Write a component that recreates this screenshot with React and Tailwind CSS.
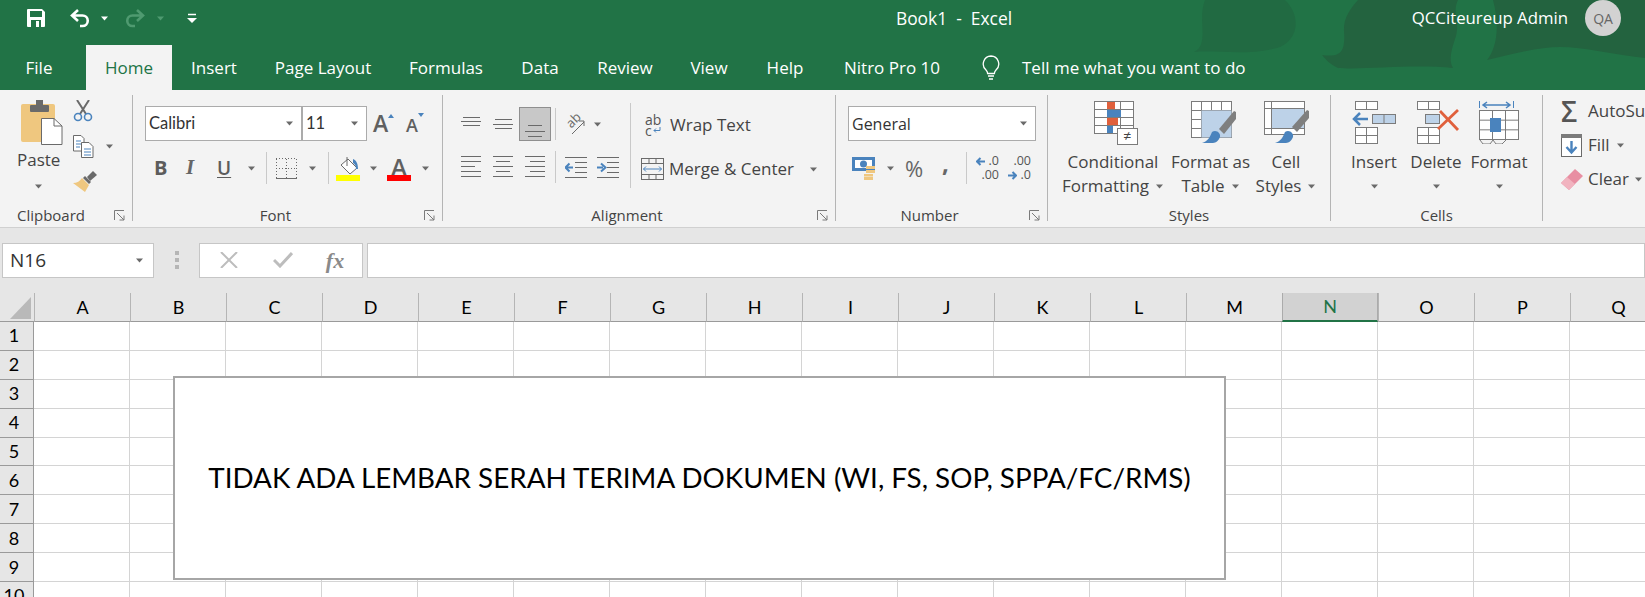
const COLUMNS = ["A", "B", "C", "D", "E", "F", "G", "H", "I", "J", "K", "L", "M", "N", "O", "P", "Q"];
const ROWS = [1, 2, 3, 4, 5, 6, 7, 8, 9, 10];
const GRAY = "#6a6a6a";
const BLUE = "#4a83bd";
const TAN = "#efc77f";
const ORANGE = "#e0603c";
const LIGHT = "#bdd2e8";

function Caret({ color = "#6a6a6a" }) {
  return (
    <svg width="9" height="5" viewBox="0 0 9 5" className="shrink-0">
      <path d="M1 .5h7L4.5 4.500z" fill={color} />
    </svg>
  );
}

function Launcher() {
  return (
    <svg width="11" height="11" viewBox="0 0 11 11">
      <path d="M.5 10V.5H10M3 3l7 7M10 5.5V10H5.5" fill="none" stroke="#7a7a7a" />
    </svg>
  );
}

function Lines({ rows, width = 20, height = 22 }) {
  return (
    <svg width={width} height={height} viewBox={`0 0 ${width} ${height}`}>
      {rows.map(([x1, x2, y]) => (
        <path key={`${x1}-${y}`} d={`M${x1} ${y + 0.5}H${x2}`} stroke={GRAY} />
      ))}
    </svg>
  );
}

function SaveIcon() {
  return (
    <svg width="20" height="20" viewBox="0 0 20 20">
      <path d="M1 2a1 1 0 0 1 1-1h14l3 3v14a1 1 0 0 1-1 1H2a1 1 0 0 1-1-1z" fill="#fff" />
      <rect x="4" y="3" width="12" height="6" fill="#217346" />
      <rect x="5" y="12" width="10" height="7" fill="#217346" />
      <rect x="10" y="13" width="3" height="6" fill="#fff" />
    </svg>
  );
}

function UndoIcon({ color, flip }) {
  return (
    <svg width="22" height="20" viewBox="0 0 22 20" className={flip ? "-scale-x-100" : ""}>
      <path d="M9 2L3 7.5 9 13M3 7.5h10.5a5 5 0 0 1 0 10.5H11" fill="none" stroke={color} strokeWidth="2.6" />
    </svg>
  );
}

function QuickAccess() {
  return (
    <svg width="10" height="10" viewBox="0 0 10 10">
      <path d="M1 1.500h8" stroke="#fff" strokeWidth="1.500" />
      <path d="M0 5h10L5 10z" fill="#fff" />
    </svg>
  );
}

function Bulb() {
  return (
    <svg width="18" height="25" viewBox="0 0 18 25">
      <path
        d="M9 1a8 8 0 0 0-5 14c1 1 1.600 2.500 1.600 3.500h6.800c0-1 .6-2.500 1.600-3.500A8 8 0 0 0 9 1zM6 21h6M7 24h4"
        fill="none"
        stroke="#fff"
        strokeWidth="1.300"
      />
    </svg>
  );
}

function PasteIcon() {
  return (
    <svg width="42" height="46" viewBox="0 0 42 46">
      <rect x="0" y="4" width="34" height="38" rx="2" fill={TAN} />
      <rect x="15" y="0" width="7" height="6" fill={GRAY} />
      <rect x="9" y="5" width="19" height="7" rx="1" fill={GRAY} />
      <path d="M20.500 18.500H33L41 26v18.500H20.500z" fill="#fff" stroke={GRAY} />
      <path d="M33 18.500V26h8" fill="none" stroke={GRAY} />
    </svg>
  );
}

function CutIcon() {
  return (
    <svg width="20" height="22" viewBox="0 0 20 22">
      <path d="M4 0l9 14M16 0L7 14" stroke={GRAY} strokeWidth="2" />
      <circle cx="5" cy="17" r="3.500" fill="none" stroke={BLUE} strokeWidth="1.600" />
      <circle cx="15" cy="17" r="3.500" fill="none" stroke={BLUE} strokeWidth="1.600" />
    </svg>
  );
}

function CopyIcon() {
  return (
    <svg width="21" height="23" viewBox="0 0 21 23">
      <path d="M.5.500H8l3 3V16H.5z" fill="#fff" stroke={GRAY} />
      <path d="M8.500 7.500H16l4 4v11H8.500z" fill="#fff" stroke={GRAY} />
      <path d="M3 6h5M3 9h5M3 12h4M11 14h7M11 17h7M11 20h7" stroke={BLUE} />
    </svg>
  );
}

function PainterIcon() {
  return (
    <svg width="24" height="21" viewBox="0 0 24 21">
      <path d="M20 0l4 4-7 6-3-4z" fill={GRAY} />
      <path d="M12 5l6 6-2 2-6-6z" fill={GRAY} />
      <path d="M9 7l7 7-4 7L0 12c4 0 7-2 9-5z" fill={TAN} />
    </svg>
  );
}

function BordersIcon() {
  return (
    <svg width="21" height="21" viewBox="0 0 21 21">
      <path d="M.5 1v19M10.500 1v19M20.500 1v19M0 .5h21M0 10.500h21" stroke={GRAY} strokeDasharray="1 2" />
      <path d="M0 20.500h21" stroke={GRAY} />
    </svg>
  );
}

function FillIcon() {
  return (
    <svg width="24" height="25" viewBox="0 0 24 25">
      <path d="M12 3l9 9-7 6-9-9z" fill="#fff" stroke={GRAY} />
      <path d="M11 1v9" stroke={GRAY} />
      <path d="M17 3c3 1 5 4 5 10h-2c0-3-1-5-3-6z" fill={BLUE} />
      <rect y="19" width="24" height="6" fill="#ffff00" />
    </svg>
  );
}

function GridBox({ x, y, w, h, cols = 1, rows = 1 }) {
  const parts = [];
  for (let c = 1; c < cols; c++) parts.push(`M${x + (w * c) / cols} ${y}v${h}`);
  for (let r = 1; r < rows; r++) parts.push(`M${x} ${y + (h * r) / rows}h${w}`);
  return (
    <>
      <rect x={x} y={y} width={w} height={h} fill="#fff" stroke="#7b7b7b" />
      <path d={parts.join("")} stroke="#7b7b7b" fill="none" />
    </>
  );
}

function ConditionalIcon() {
  return (
    <svg width="44" height="44" viewBox="0 0 44 44">
      <GridBox x={0.5} y={0.5} w={39} h={32} cols={3} rows={4} />
      <rect x="13" y="1" width="8" height="7" fill={ORANGE} />
      <rect x="13" y="9" width="14" height="7" fill={BLUE} />
      <rect x="13" y="17" width="11" height="7" fill={ORANGE} />
      <rect x="13" y="25" width="6" height="7" fill={BLUE} />
      <rect x="23.500" y="27.500" width="20" height="16" fill="#fff" stroke="#7b7b7b" />
      <text x="33.500" y="40" textAnchor="middle" fontSize="14" fill="#444">≠</text>
    </svg>
  );
}

function TableStyleIcon() {
  return (
    <svg width="45" height="43" viewBox="0 0 45 43">
      <GridBox x={0.5} y={0.5} w={40} h={36} cols={4} rows={4} />
      <rect x="10.500" y="9.500" width="30" height="27" fill={LIGHT} />
      <path d="M28 28L43 10l2 1v7L33 33z" fill="#7f7f7f" />
      <path d="M11 42c6-2 8-6 10-11 4-3 9 1 8 5-1 3-4 6-7 6z" fill={BLUE} />
    </svg>
  );
}

function CellStyleIcon() {
  return (
    <svg width="45" height="43" viewBox="0 0 45 43">
      <rect x=".5" y=".5" width="40" height="33" fill="#fff" stroke="#7b7b7b" />
      <path d="M7.500 1v32M1 7.500h39M1 27.500h39" stroke="#7b7b7b" />
      <rect x="8" y="8" width="32" height="19" fill={LIGHT} />
      <path d="M28 26L43 9l2 1v7L33 31z" fill="#7f7f7f" />
      <path d="M11 42c6-2 8-6 10-11 4-3 9 1 8 5-1 3-4 6-7 6z" fill={BLUE} />
    </svg>
  );
}

function InsertIcon() {
  return (
    <svg width="44" height="43" viewBox="0 0 44 43">
      <GridBox x={3.5} y={0.5} w={22} h={8} cols={2} />
      <rect x="20.500" y="13.500" width="23" height="9" fill={LIGHT} stroke="#7b7b7b" />
      <path d="M32 14v8" stroke="#7b7b7b" />
      <path d="M8 12l-6 6 6 6M2 18h14" fill="none" stroke={BLUE} strokeWidth="2.500" />
      <GridBox x={3.5} y={26.5} w={22} h={16} cols={2} rows={2} />
    </svg>
  );
}

function DeleteIcon() {
  return (
    <svg width="44" height="43" viewBox="0 0 44 43">
      <GridBox x={0.5} y={0.5} w={22} h={8} cols={2} />
      <rect x="8.500" y="13.500" width="14" height="9" fill={LIGHT} stroke="#7b7b7b" />
      <GridBox x={0.5} y={26.5} w={22} h={16} cols={2} rows={2} />
      <path d="M23 10l18 19M41 9L21 28" stroke={ORANGE} strokeWidth="2.800" />
    </svg>
  );
}

function FormatIcon() {
  return (
    <svg width="41" height="43" viewBox="0 0 41 43">
      <path d="M.5 0v7M34.500 0v7" stroke={BLUE} />
      <path d="M8 1L4 4l4 3M4 4h27M27 1l4 3-4 3" fill="none" stroke={BLUE} strokeWidth="1.500" />
      <GridBox x={0.5} y={9.5} w={39} h={29} cols={3} rows={3} />
      <rect x="11" y="17" width="11" height="14" fill={BLUE} />
      <path d="M1 39l3 4h7l3-4M14 39l3 4h6l4-4" fill="none" stroke="#7b7b7b" />
    </svg>
  );
}

function MergeIcon() {
  return (
    <svg width="23" height="22" viewBox="0 0 23 22">
      <rect x=".5" y=".5" width="22" height="21" fill="none" stroke={GRAY} />
      <path d="M1 5.500h21M1 16.500h21M8 1v4M15 1v4M8 17v4M15 17v4" stroke={GRAY} />
      <path d="M5 8.500L2.500 11 5 13.500M2.500 11h18M18 8.500l2.500 2.500-2.500 2.500" fill="none" stroke={BLUE} />
    </svg>
  );
}

function OrientationIcon() {
  return (
    <svg width="20" height="22" viewBox="0 0 20 22" className="overflow-visible">
      <text x="2" y="12" fontSize="13" fill={GRAY} transform="rotate(-45 8 10)">ab</text>
      <path d="M6 21L18 9M13 8h5v5" fill="none" stroke={GRAY} />
    </svg>
  );
}

function IndentIcon({ increase }) {
  return (
    <svg width="22" height="21" viewBox="0 0 22 21">
      <path d="M0 .5h22M10 5.500h12M10 10.500h12M10 15.500h12M0 20.500h22" stroke={GRAY} />
      {increase ? (
        <path d="M0 10.500h6M4 6.500l4.500 4-4.500 4" fill="none" stroke={BLUE} strokeWidth="2" />
      ) : (
        <path d="M8 10.500H2M4.500 6.500L.5 10.500l4 4" fill="none" stroke={BLUE} strokeWidth="2" />
      )}
    </svg>
  );
}

function CurrencyIcon() {
  return (
    <svg width="24" height="23" viewBox="0 0 24 23">
      <rect width="23" height="14" fill={BLUE} />
      <rect x="3" y="3" width="17" height="8" fill="#fff" />
      <circle cx="11.500" cy="7" r="3.500" fill={BLUE} />
      <path d="M14 9h9v3h-9zM14 13h9v3h-9zM12 17h9v2.500h-9zM12 20h9v3h-9z" fill={TAN} />
    </svg>
  );
}

function DecimalIcon({ increase }) {
  const arrow = increase ? (
    <svg width="9" height="9" viewBox="0 0 9 9">
      <path d="M4.500 1L1 4.500 4.500 8M1 4.500h8" fill="none" stroke={BLUE} strokeWidth="2" />
    </svg>
  ) : (
    <svg width="9" height="9" viewBox="0 0 9 9">
      <path d="M4.500 1L8 4.500 4.500 8M8 4.500H0" fill="none" stroke={BLUE} strokeWidth="2" />
    </svg>
  );
  const arrowRow = (
    <div className="flex items-center justify-between">
      {arrow}
      <span>.0</span>
    </div>
  );
  return (
    <div className="flex w-[23px] flex-col text-[12.500px] leading-[14px] text-[#555]">
      {increase ? arrowRow : <span className="text-right">.00</span>}
      {increase ? <span className="text-right">.00</span> : arrowRow}
    </div>
  );
}

function FillDownIcon() {
  return (
    <svg width="21" height="23" viewBox="0 0 21 23">
      <rect x=".5" y=".5" width="20" height="22" fill="#fff" stroke={GRAY} />
      <rect width="21" height="4" fill="#7b7b7b" />
      <path d="M10.500 7v12M5.500 13l5 5.500 5-5.500" fill="none" stroke={BLUE} strokeWidth="2.400" />
    </svg>
  );
}

function EraserIcon() {
  return (
    <svg width="22" height="21" viewBox="0 0 22 21">
      <path d="M14 0l8 7-14 14-8-7z" fill="#e88ea2" />
      <path d="M6 8l8 7-6 6-8-7z" fill="#f1b3bf" />
    </svg>
  );
}

function Tab({ label, width, active }) {
  return (
    <div
      className={`flex h-full items-center justify-center ${width} ${active ? "bg-[#f3f3f3] text-[#217346]" : "text-white"}`}
    >
      {label}
    </div>
  );
}

function Group({ label, width, launcher, children }) {
  return (
    <div className={`flex h-[126px] shrink-0 flex-col border-r border-[#b4b4b4] ${width}`}>
      <div className="relative min-h-0 flex-1">{children}</div>
      <div className="flex h-[12px] items-center">
        <div className="flex-1 text-center text-[15px] leading-none text-[#444]">{label}</div>
        {launcher ? (
          <div className="flex w-[24px] justify-center pr-[2px]">
            <Launcher />
          </div>
        ) : null}
      </div>
    </div>
  );
}

function Combo({ label, width, textClass = "text-[16px]" }) {
  return (
    <div className={`flex h-[35px] items-center justify-between border border-[#ababab] bg-white pl-[3px] pr-[7px] ${width} ${textClass} text-[#333]`}>
      <span>{label}</span>
      <Caret />
    </div>
  );
}

function Sep({ height = "h-[32px]" }) {
  return <div className={`w-px shrink-0 bg-[#c9c9c9] ${height}`} />;
}

function BigButton({ icon, width, iconClass = "", lines, caretLine }) {
  return (
    <div className={`flex shrink-0 flex-col items-center text-[17px] leading-[24px] text-[#444] ${width}`}>
      <div className={`flex h-[49px] items-start justify-center ${iconClass}`}>{icon}</div>
      {lines.map((line, index) => (
        <div key={line} className="flex items-center gap-[6px] whitespace-nowrap">
          {line}
          {caretLine && index === lines.length - 1 ? <Caret /> : null}
        </div>
      ))}
    </div>
  );
}

function Ribbon() {
  return (
    <div className="flex h-[138px] border-b border-[#d0d0d0] bg-[#f3f3f3] pt-[5px]">
      <Group label="Clipboard" width="w-[133px] [&>div:last-child>div:first-child]:pr-[6px]" launcher>
        <div className="flex pl-[21px] pt-[5px]">
          <div className="flex w-[52px] flex-col items-start">
            <PasteIcon />
            <div className="-ml-[4px] mt-[3px] text-[17px] leading-[22px] text-[#444]">Paste</div>
            <div className="ml-[13px] mt-[13px]">
              <Caret />
            </div>
          </div>
          <div className="flex flex-col items-start gap-[13px]">
            <CutIcon />
            <div className="flex items-center gap-[11px]">
              <CopyIcon />
              <Caret />
            </div>
            <PainterIcon />
          </div>
        </div>
      </Group>

      <Group label="Font" width="w-[310px]" launcher>
        <div className="pl-[12px] pt-[11px]">
          <div className="flex items-center">
            <Combo label="Calibri" width="w-[157px]" textClass="font-['Lato',sans-serif] text-[16.500px]" />
            <Combo label="11" width="w-[65px]" textClass="font-['Lato',sans-serif] text-[16.500px]" />
            <div className="ml-[6px] flex w-[33px] items-start">
              <span className="text-[23px] font-semibold leading-[23px] text-[#606060]">A</span>
              <svg width="6" height="4" viewBox="0 0 6 4" className="mt-[2px]">
                <path d="M0 4h6L3 0z" fill={BLUE} />
              </svg>
            </div>
            <div className="flex w-[24px] items-start">
              <span className="mt-[3px] text-[18px] font-semibold leading-[20px] text-[#606060]">A</span>
              <svg width="6" height="4" viewBox="0 0 6 4" className="mt-[1px]">
                <path d="M0 0h6L3 4z" fill={BLUE} />
              </svg>
            </div>
          </div>
          <div className="mt-[9px] flex h-[36px] items-center">
            <span className="ml-[9px] w-[32px] text-[20px] font-bold text-[#5c5c5c]">B</span>
            <span className="w-[31px] font-['Liberation_Serif',serif] text-[21px] font-bold italic text-[#666]">I</span>
            <span className="w-[30px] text-[19px] font-semibold text-[#5c5c5c] underline underline-offset-2">U</span>
            <Caret />
            <div className="ml-[10px]">
              <Sep />
            </div>
            <div className="ml-[9px]">
              <BordersIcon />
            </div>
            <div className="ml-[11px]">
              <Caret />
            </div>
            <div className="ml-[11px]">
              <Sep />
            </div>
            <div className="ml-[7px]">
              <FillIcon />
            </div>
            <div className="ml-[9px]">
              <Caret />
            </div>
            <div className="ml-[9px] flex w-[24px] flex-col items-center">
              <span className="h-[19px] text-[24px] font-semibold leading-[22px] text-[#606060]">A</span>
              <div className="h-[6px] w-full bg-[#ff0000]" />
            </div>
            <div className="ml-[10px]">
              <Caret />
            </div>
          </div>
        </div>
      </Group>

      <Group label="Alignment" width="w-[393px]" launcher>
        <div className="flex pl-[18px] pt-[12px]">
          <div className="flex w-[169px] flex-col">
            <div className="flex h-[34px] items-center">
              <div className="w-[32px]">
                <Lines rows={[[2, 19, 4], [0, 20, 8], [2, 19, 12]]} />
              </div>
              <div className="w-[26px]">
                <Lines rows={[[2, 19, 6], [0, 20, 11], [2, 19, 15]]} />
              </div>
              <div className="flex h-[34px] w-[32px] items-end justify-center border border-[#8f8f8f] bg-[#c8c8c8] pb-[3px]">
                <Lines rows={[[3, 17, 6], [0, 20, 12], [3, 17, 17]]} height={18} />
              </div>
              <div className="ml-[4px]">
                <Sep />
              </div>
              <div className="ml-[10px]">
                <OrientationIcon />
              </div>
              <div className="ml-[7px]">
                <Caret />
              </div>
            </div>
            <div className="mt-[10px] flex h-[32px] items-center">
              <div className="w-[32px]">
                <Lines rows={[[0, 20, 0], [0, 20, 5], [0, 14, 10], [0, 20, 15], [0, 20, 20]]} />
              </div>
              <div className="w-[32px]">
                <Lines rows={[[0, 20, 0], [3, 17, 5], [0, 20, 10], [3, 17, 15], [0, 20, 20]]} />
              </div>
              <div className="w-[26px]">
                <Lines rows={[[0, 20, 0], [5, 20, 5], [0, 20, 10], [5, 20, 15], [0, 20, 20]]} />
              </div>
              <div className="ml-[4px]">
                <Sep />
              </div>
              <div className="ml-[9px]">
                <IndentIcon />
              </div>
              <div className="ml-[10px]">
                <IndentIcon increase />
              </div>
            </div>
          </div>
          <div className="-mt-[4px] h-[85px]">
            <Sep height="h-[85px]" />
          </div>
          <div className="flex flex-col pl-[10px]">
            <div className="flex h-[36px] items-center gap-[8px] text-[17px] text-[#444]">
              <div className="ml-[4px] flex w-[17px] flex-col text-[14px] leading-[11px] text-[#555]">
                <span>ab</span>
                <span className="flex items-center gap-[1px]">
                  c
                  <svg width="8" height="7" viewBox="0 0 8 7">
                    <path d="M7 0v3.500H1M3 1.500L1 3.500l2 2" fill="none" stroke={BLUE} />
                  </svg>
                </span>
              </div>
              Wrap Text
            </div>
            <div className="mt-[10px] flex h-[32px] items-center text-[17px] text-[#444]">
              <MergeIcon />
              <span className="ml-[5px] whitespace-nowrap">Merge &amp; Center</span>
              <div className="ml-[15px]">
                <Caret />
              </div>
            </div>
          </div>
        </div>
      </Group>

      <Group label="Number" width="w-[212px]" launcher>
        <div className="pl-[12px] pt-[11px]">
          <Combo label="General" width="w-[188px]" />
          <div className="mt-[9px] flex h-[36px] items-center">
            <div className="ml-[4px]">
              <CurrencyIcon />
            </div>
            <div className="ml-[10px]">
              <Caret />
            </div>
            <span className="ml-[10px] w-[37px] text-[22px] leading-none text-[#666]">%</span>
            <span className="-mt-[10px] w-[24px] text-[24px] font-bold leading-[22px] text-[#666]">,</span>
            <Sep />
            <div className="ml-[9px] flex gap-[9px]">
              <DecimalIcon increase />
              <DecimalIcon />
            </div>
          </div>
        </div>
      </Group>

      <Group label="Styles" width="w-[283px]">
        <div className="flex pl-[12px] pt-[6px]">
          <BigButton width="w-[106px]" iconClass="pl-[6px]" icon={<ConditionalIcon />} lines={["Conditional", "Formatting"]} caretLine />
          <BigButton width="w-[89px]" iconClass="pl-[5px]" icon={<TableStyleIcon />} lines={["Format as", "Table"]} caretLine />
          <BigButton width="w-[62px]" icon={<CellStyleIcon />} lines={["Cell", "Styles"]} caretLine />
        </div>
      </Group>

      <Group label="Cells" width="w-[212px]">
        <div className="flex pl-[12px] pt-[6px]">
          <BigButton width="w-[62px]" icon={<InsertIcon />} lines={["Insert"]} />
          <BigButton width="w-[62px]" iconClass="pl-[6px]" icon={<DeleteIcon />} lines={["Delete"]} />
          <BigButton width="w-[64px]" icon={<FormatIcon />} lines={["Format"]} />
        </div>
        <div className="flex pl-[12px]">
          <div className="flex w-[62px] justify-center pt-[10px]">
            <Caret />
          </div>
          <div className="flex w-[62px] justify-center pt-[10px]">
            <Caret />
          </div>
          <div className="flex w-[64px] justify-center pt-[10px]">
            <Caret />
          </div>
        </div>
      </Group>

      <div className="flex flex-col gap-[10px] whitespace-nowrap pl-[18px] pt-[4px] text-[17px] text-[#444]">
        <div className="flex h-[24px] items-center gap-[5px]">
          <span className="w-[22px] text-[28px] font-semibold leading-[24px] text-[#555]">Σ</span>
          AutoSum
        </div>
        <div className="flex h-[24px] items-center gap-[6px]">
          <FillDownIcon />
          Fill
          <Caret />
        </div>
        <div className="flex h-[24px] items-center gap-[5px]">
          <EraserIcon />
          Clear
          <Caret />
        </div>
      </div>
    </div>
  );
}

function FormulaBar() {
  return (
    <div className="flex h-[65px] items-center bg-[#e6e6e6] pb-[1px] pl-[2px]">
      <div className="flex h-[35px] w-[152px] items-center justify-between border border-[#c6c6c6] bg-white pl-[7px] pr-[9px] text-[19px] text-[#333]">
        N16
        <Caret />
      </div>
      <div className="flex w-[45px] flex-col items-center gap-[3px]">
        <div className="h-[4px] w-[4px] bg-[#b5b5b5]" />
        <div className="h-[4px] w-[4px] bg-[#b5b5b5]" />
        <div className="h-[4px] w-[4px] bg-[#b5b5b5]" />
      </div>
      <div className="flex h-[35px] w-[164px] items-center border border-[#c6c6c6] bg-white">
        <div className="flex w-[55px] justify-center pl-[2px]">
          <svg width="18" height="16" viewBox="0 0 18 16">
            <path d="M1 0l16 16M17 0L1 16" stroke="#bdbdbd" strokeWidth="2" />
          </svg>
        </div>
        <div className="flex w-[55px] justify-center">
          <svg width="20" height="16" viewBox="0 0 20 16">
            <path d="M1 8l6 6L19 1" fill="none" stroke="#bdbdbd" strokeWidth="3" />
          </svg>
        </div>
        <span className="w-[50px] text-center font-['Liberation_Serif',serif] text-[22px] font-bold italic text-[#8a8a8a]">fx</span>
      </div>
      <div className="ml-[4px] h-[35px] flex-1 border border-[#c6c6c6] bg-white" />
    </div>
  );
}

function Sheet() {
  return (
    <div className="relative font-['Lato',sans-serif] text-[18px] text-black">
      <div className="grid grid-cols-[34px_repeat(17,96px)] grid-rows-[29px_repeat(10,28.900px)]">
        <div className="relative border-b border-[#9a9a9a] bg-[#e6e6e6]">
          <svg width="22" height="22" viewBox="0 0 22 22" className="absolute left-[10px] top-[4px]">
            <path d="M21 0v22H0z" fill="#b9b9b9" />
          </svg>
        </div>
        {COLUMNS.map((col) => (
          <div
            key={col}
            className={
              col === "N"
                ? "flex items-center justify-center border-b-2 border-l border-r border-b-[#217346] border-l-[#ababab] border-r-[#ababab] bg-[#d2d2d2] text-[#217346]"
                : "flex items-center justify-center border-b border-l border-b-[#9a9a9a] border-l-[#b5b5b5] bg-[#e6e6e6]"
            }
          >
            {col}
          </div>
        ))}
        {ROWS.map((row) => (
          <div key={row} className="contents">
            <div className="flex items-center justify-center border-b border-r border-b-[#9a9a9a] border-r-[#9a9a9a] bg-[#e6e6e6] pr-[5px]">
              {row}
            </div>
            {COLUMNS.map((col) => (
              <div key={col} className="border-b border-r border-[#d4d4d4] bg-white" />
            ))}
          </div>
        ))}
      </div>
      <div className="absolute left-[173px] top-[83px] flex h-[204px] w-[1053px] items-center justify-center border-2 border-[#a6a6a6] bg-white text-[27.800px] leading-none">
        TIDAK ADA LEMBAR SERAH TERIMA DOKUMEN (WI, FS, SOP, SPPA/FC/RMS)
      </div>
    </div>
  );
}

export default function App() {
  return (
    <div className="h-[597px] w-[1645px] overflow-hidden bg-white font-['Open_Sans',sans-serif]">
      <div className="relative bg-[#217346]">
        <svg width="460" height="90" viewBox="0 0 460 90" className="absolute right-0 top-0">
          <path d="M9 52C25 44 12 20 20 0h80c18 18 12 42-8 48-30 8-60 2-83 4z" fill="#216a42" />
          <path d="M137 55c16 2 24 0 22-24-1-14 8-24 14-31h100c-6 12 2 22-2 36-4 12-8 24-3 32-40-4-90 2-115 0-8-4-12-8-16-13z" fill="#23633f" />
          <path d="M302 60c8-10 14-30 6-60h152v58c-40-4-70-14-100-10-24 3-40 8-58 12z" fill="#23633f" />
        </svg>
        <div className="relative flex h-[45px] items-center pb-[9px] text-white">
          <div className="flex w-[600px] items-center pl-[26px]">
            <SaveIcon />
            <div className="ml-[23px]">
              <UndoIcon color="#ffffff" />
            </div>
            <div className="ml-[9px]">
              <Caret color="#ffffff" />
            </div>
            <div className="ml-[15px]">
              <UndoIcon color="#4f9a70" flip />
            </div>
            <div className="ml-[10px]">
              <Caret color="#4f9a70" />
            </div>
            <div className="ml-[22px]">
              <QuickAccess />
            </div>
          </div>
          <div className="w-[708px] whitespace-pre text-center text-[17.400px]">Book1  -  Excel</div>
          <div className="ml-auto flex items-center gap-[17px] pr-[24px] text-[16.800px]">
            QCCiteureup Admin
            <div className="flex h-[36px] w-[36px] items-center justify-center rounded-full bg-[#d2d2d2] text-[14px] text-[#666]">QA</div>
          </div>
        </div>
        <div className="relative flex h-[45px] items-center text-[17px]">
          <Tab label="File" width="w-[78px]" />
          <div className="w-[8px]" />
          <Tab label="Home" width="w-[86px]" active />
          <Tab label="Insert" width="w-[84px]" />
          <Tab label="Page Layout" width="w-[134px]" />
          <Tab label="Formulas" width="w-[112px]" />
          <Tab label="Data" width="w-[76px]" />
          <Tab label="Review" width="w-[94px]" />
          <Tab label="View" width="w-[74px]" />
          <Tab label="Help" width="w-[78px]" />
          <Tab label="Nitro Pro 10" width="w-[136px]" />
          <div className="flex w-[62px] justify-center">
            <Bulb />
          </div>
          <span className="text-white">Tell me what you want to do</span>
        </div>
      </div>
      <Ribbon />
      <FormulaBar />
      <Sheet />
    </div>
  );
}
